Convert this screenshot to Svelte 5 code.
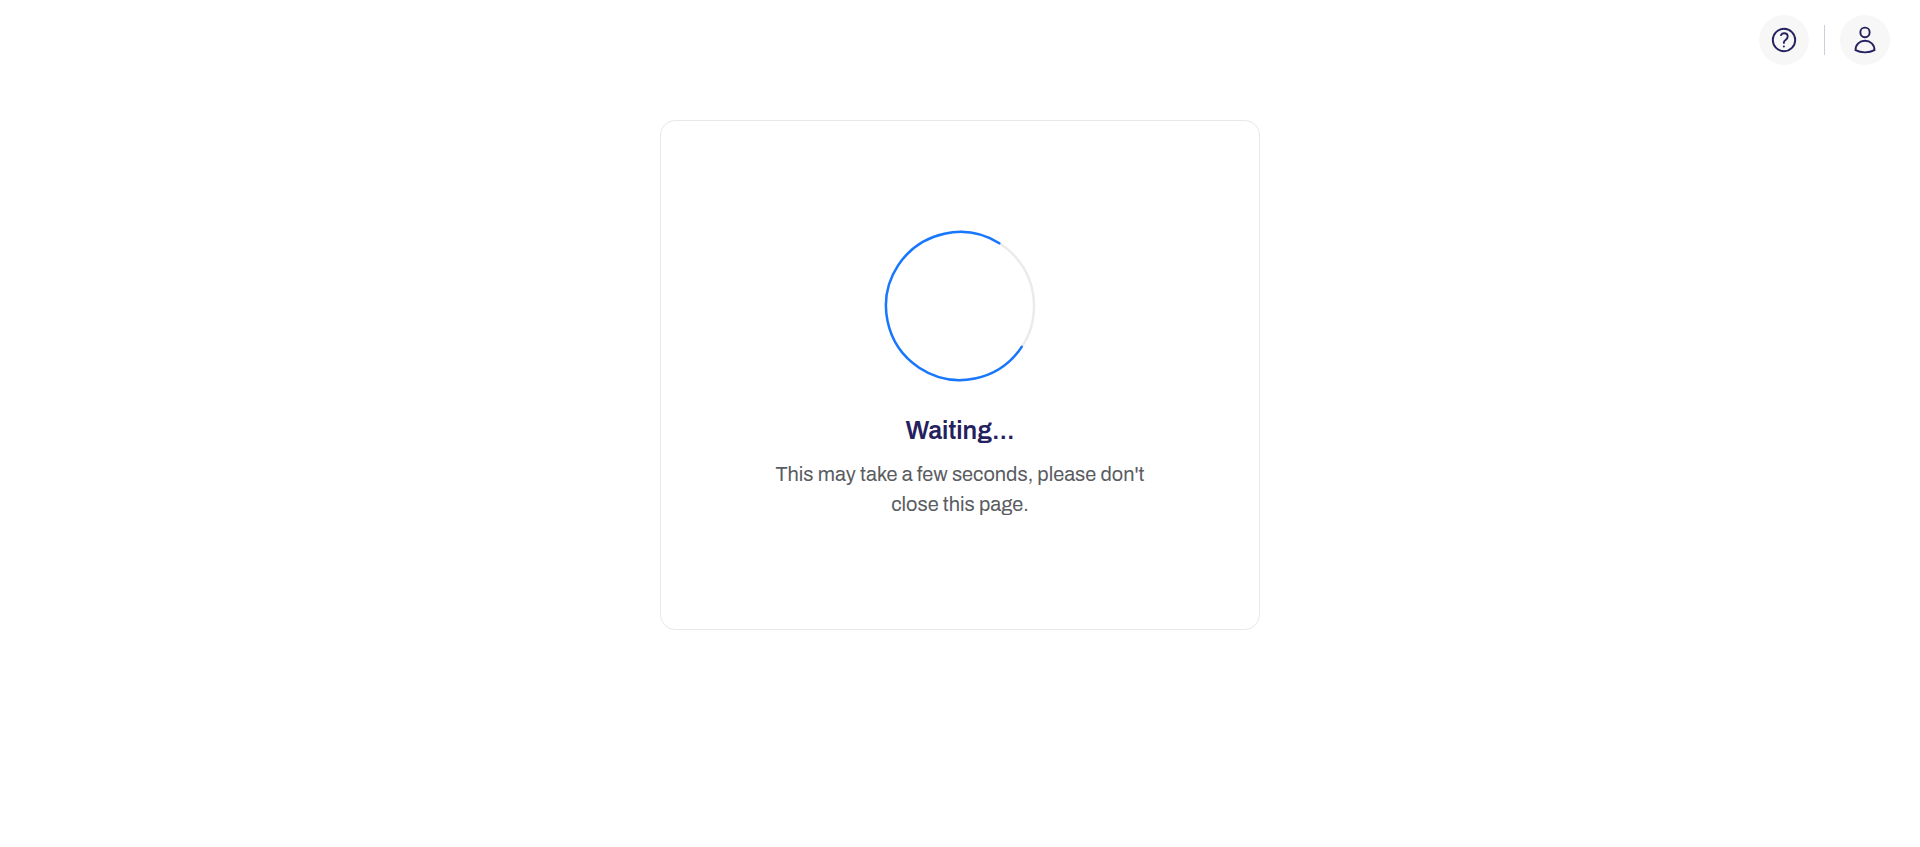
<script>
  const title = 'Waiting...';
  const message = "This may take a few seconds, please don't close this page.";
</script>

<header class="topbar">
  <button class="round" type="button" aria-label="Help">
    <svg width="30" height="30" viewBox="0 0 30 30" fill="none" stroke-width="1.9" aria-hidden="true">
      <circle cx="15" cy="15" r="11.2" />
      <path d="M12 10.1C12.6 8.9 13.8 8.3 15.1 8.3c2.1 0 3.6 1.4 3.6 3.3 0 1.4-.8 2.3-1.900 3.100-1.100.8-1.900 1.400-1.900 2.600v.6" stroke-linecap="round" />
      <circle class="dot" cx="14.9" cy="21.6" r="1" />
    </svg>
  </button>
  <span class="divider"></span>
  <button class="round" type="button" aria-label="Account">
    <svg width="30" height="30" viewBox="0 0 30 30" fill="none" stroke-width="1.9" aria-hidden="true">
      <rect x="10.4" y="2.6" width="9.200" height="9.600" rx="4.400" />
      <path d="M5.500 25.200C5.500 19.500 9.600 15.700 15 15.700s9.500 3.800 9.500 9.500c-3 1.600-6.100 2.200-9.500 2.200s-6.500-.6-9.500-2.200Z" stroke-linejoin="round" />
    </svg>
  </button>
</header>

<main>
  <section class="card" role="status">
    <svg class="spinner" viewBox="0 0 150 150" fill="none" stroke-width="2.5" aria-hidden="true">
      <circle class="track" cx="75" cy="75" r="74" />
      <circle class="arc" cx="75" cy="75" r="74" pathLength="100" transform="rotate(33.5 75 75)" />
    </svg>
    <h1>{title}</h1>
    <p>{message}</p>
  </section>
</main>

<style>
  :global(body) {
    background: #fff;
    font-family: "Archivo", "Liberation Sans", Arial, sans-serif;
  }

  .topbar {
    display: flex;
    align-items: center;
    justify-content: flex-end;
    gap: 15px;
    padding: 15px 30px;
  }

  .round {
    display: flex;
    align-items: center;
    justify-content: center;
    width: 50px;
    height: 50px;
    padding: 0;
    border: 0;
    border-radius: 50%;
    background: #f7f7f7;
    cursor: pointer;
  }

  .round svg {
    stroke: #25215e;
  }

  .round .dot {
    fill: #25215e;
    stroke: none;
  }

  .divider {
    width: 1px;
    height: 30px;
    background: #c9d0dc;
  }

  main {
    display: flex;
    justify-content: center;
    padding: 40px 30px;
  }

  .card {
    box-sizing: border-box;
    display: flex;
    flex-direction: column;
    align-items: center;
    width: 100%;
    max-width: 600px;
    padding: 110px;
    border: 1px solid #e8e8ea;
    border-radius: 15px;
    text-align: center;
  }

  .spinner {
    width: 150px;
    height: 150px;
    overflow: visible;
  }

  .track {
    stroke: #ebebee;
  }

  .arc {
    stroke: #1777ff;
    stroke-linecap: round;
    stroke-dasharray: 74.6 25.4;
  }

  h1 {
    margin: 35px 0 13px;
    color: #25215e;
    font-size: 25px;
    font-weight: 600;
    line-height: 30px;
  }

  p {
    margin: 0;
    color: #5a5c62;
    font-size: 20px;
    line-height: 30px;
  }
</style>
